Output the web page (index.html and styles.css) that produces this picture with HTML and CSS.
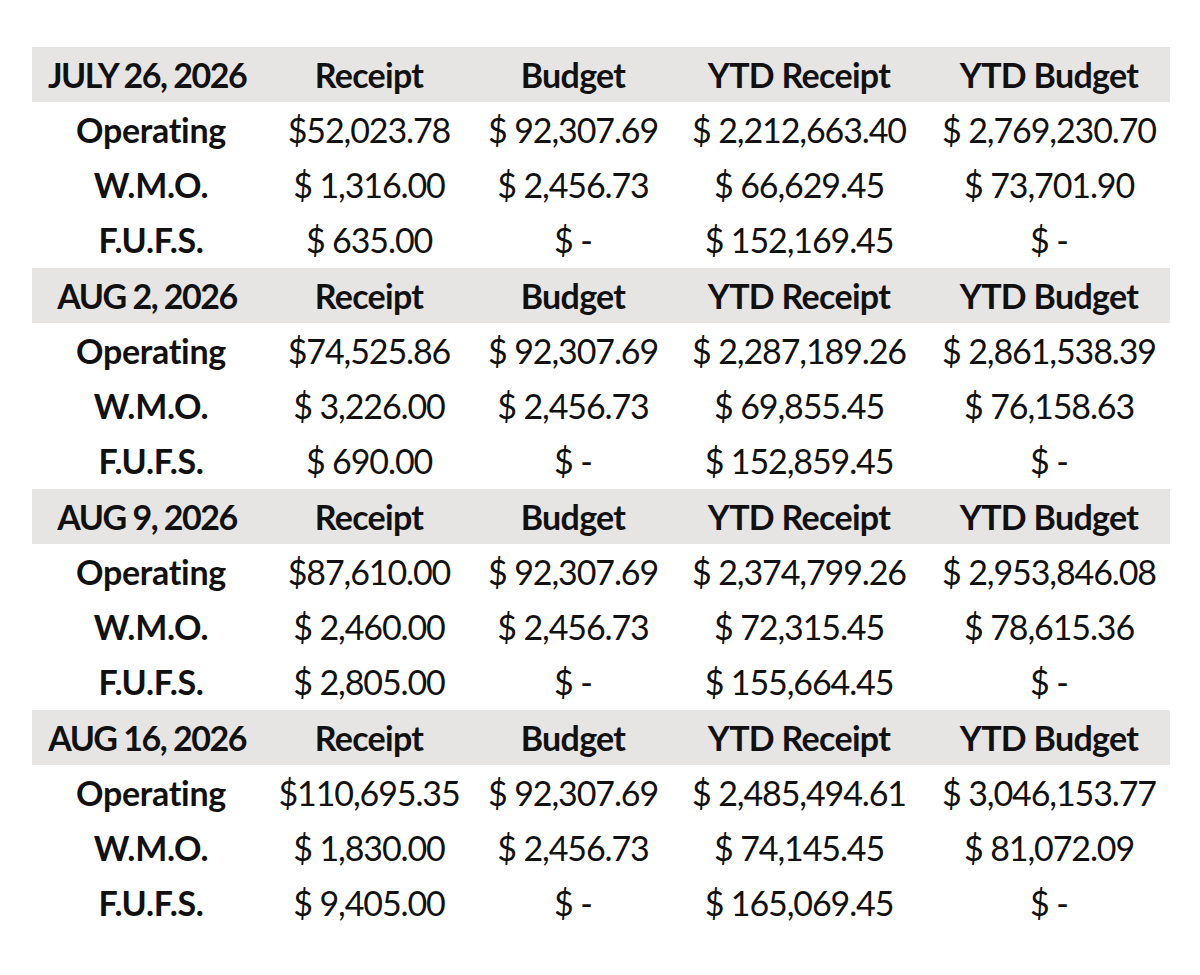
FILE: index.html
```html
<!DOCTYPE html>
<html>
<head>
<meta charset="utf-8">
<link rel="stylesheet" href="styles.css">
</head>
<body>
<table class="report">
  <colgroup>
    <col class="c1"><col class="c2"><col class="c3"><col class="c4"><col class="c5">
  </colgroup>
  <tbody>
    <tr class="head"><th class="date">JULY 26, 2026</th><th>Receipt</th><th>Budget</th><th>YTD Receipt</th><th>YTD Budget</th></tr>
    <tr><th class="label">Operating</th><td>$52,023.78</td><td>$ 92,307.69</td><td>$ 2,212,663.40</td><td>$ 2,769,230.70</td></tr>
    <tr><th class="label">W.M.O.</th><td>$ 1,316.00</td><td>$ 2,456.73</td><td>$ 66,629.45</td><td>$ 73,701.90</td></tr>
    <tr><th class="label">F.U.F.S.</th><td>$ 635.00</td><td>$ -</td><td>$ 152,169.45</td><td>$ -</td></tr>

    <tr class="head"><th class="date">AUG 2, 2026</th><th>Receipt</th><th>Budget</th><th>YTD Receipt</th><th>YTD Budget</th></tr>
    <tr><th class="label">Operating</th><td>$74,525.86</td><td>$ 92,307.69</td><td>$ 2,287,189.26</td><td>$ 2,861,538.39</td></tr>
    <tr><th class="label">W.M.O.</th><td>$ 3,226.00</td><td>$ 2,456.73</td><td>$ 69,855.45</td><td>$ 76,158.63</td></tr>
    <tr><th class="label">F.U.F.S.</th><td>$ 690.00</td><td>$ -</td><td>$ 152,859.45</td><td>$ -</td></tr>

    <tr class="head"><th class="date">AUG 9, 2026</th><th>Receipt</th><th>Budget</th><th>YTD Receipt</th><th>YTD Budget</th></tr>
    <tr><th class="label">Operating</th><td>$87,610.00</td><td>$ 92,307.69</td><td>$ 2,374,799.26</td><td>$ 2,953,846.08</td></tr>
    <tr><th class="label">W.M.O.</th><td>$ 2,460.00</td><td>$ 2,456.73</td><td>$ 72,315.45</td><td>$ 78,615.36</td></tr>
    <tr><th class="label">F.U.F.S.</th><td>$ 2,805.00</td><td>$ -</td><td>$ 155,664.45</td><td>$ -</td></tr>

    <tr class="head"><th class="date">AUG 16, 2026</th><th>Receipt</th><th>Budget</th><th>YTD Receipt</th><th>YTD Budget</th></tr>
    <tr><th class="label">Operating</th><td>$110,695.35</td><td>$ 92,307.69</td><td>$ 2,485,494.61</td><td>$ 3,046,153.77</td></tr>
    <tr><th class="label">W.M.O.</th><td>$ 1,830.00</td><td>$ 2,456.73</td><td>$ 74,145.45</td><td>$ 81,072.09</td></tr>
    <tr><th class="label">F.U.F.S.</th><td>$ 9,405.00</td><td>$ -</td><td>$ 165,069.45</td><td>$ -</td></tr>
  </tbody>
</table>
</body>
</html>
```

FILE: styles.css
```css
html, body {
  margin: 0;
  padding: 0;
  background: #ffffff;
}

body {
  padding: 47px 0 0 32px;
  font-family: Lato, "Liberation Sans", sans-serif;
  color: #111111;
}

.report {
  border-collapse: collapse;
  table-layout: fixed;
  width: 1138px;
}

.c1 { width: 230px; }
.c2 { width: 214px; }
.c3 { width: 194px; }
.c4 { width: 258px; }
.c5 { width: 242px; }

.report th,
.report td {
  height: 55.25px;
  padding: 0;
  text-align: center;
  vertical-align: middle;
  font-size: 34px;
  line-height: 1;
  white-space: nowrap;
}

.report th {
  font-weight: 700;
  letter-spacing: -0.3px;
}

.report th.label {
  padding-left: 8px;
}

.report .head th {
  letter-spacing: -0.7px;
}

.report .head th.date {
  letter-spacing: -1.5px;
}

.report td {
  font-weight: 400;
  letter-spacing: -1.1px;
}

.report .head {
  background: #e7e5e3;
}
```
